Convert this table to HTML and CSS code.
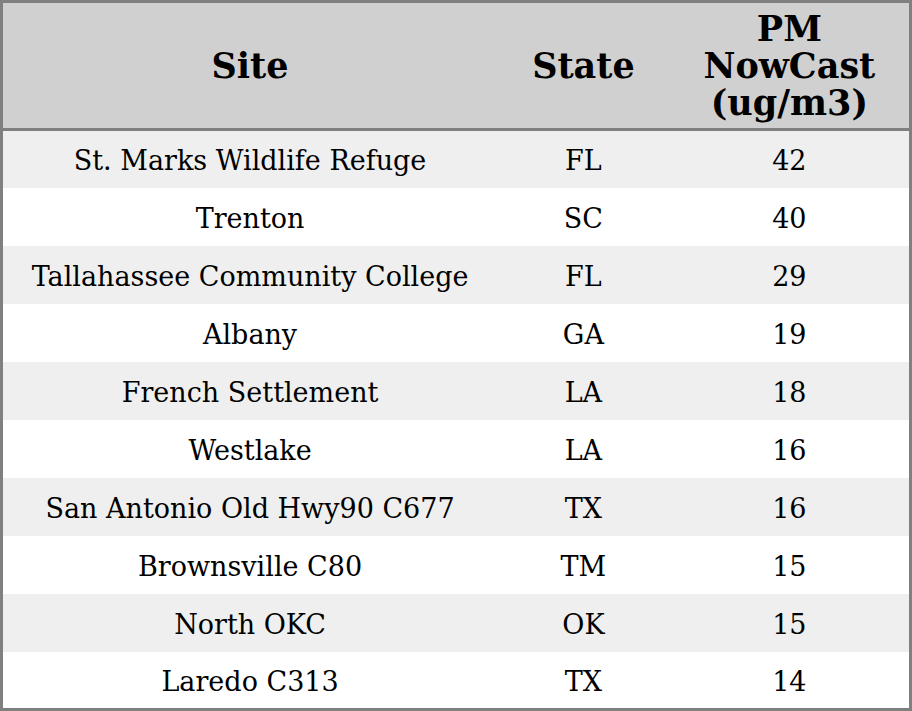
FILE: index.html
```html
<!DOCTYPE html>
<html>
<head>
<meta charset="utf-8">
<link rel="stylesheet" href="styles.css">
</head>
<body>
<table class="aq-table">
  <colgroup>
    <col class="col-site">
    <col class="col-state">
    <col class="col-pm">
  </colgroup>
  <thead>
    <tr class="head-row">
      <th>Site</th>
      <th>State</th>
      <th>PM<br>NowCast<br>(ug/m3)</th>
    </tr>
  </thead>
  <tbody>
    <tr><td>St. Marks Wildlife Refuge</td><td>FL</td><td>42</td></tr>
    <tr><td>Trenton</td><td>SC</td><td>40</td></tr>
    <tr><td>Tallahassee Community College</td><td>FL</td><td>29</td></tr>
    <tr><td>Albany</td><td>GA</td><td>19</td></tr>
    <tr><td>French Settlement</td><td>LA</td><td>18</td></tr>
    <tr><td>Westlake</td><td>LA</td><td>16</td></tr>
    <tr><td>San Antonio Old Hwy90 C677</td><td>TX</td><td>16</td></tr>
    <tr><td>Brownsville C80</td><td>TM</td><td>15</td></tr>
    <tr><td>North OKC</td><td>OK</td><td>15</td></tr>
    <tr><td>Laredo C313</td><td>TX</td><td>14</td></tr>
  </tbody>
</table>
</body>
</html>
```

FILE: styles.css
```css
html, body {
  margin: 0;
  padding: 0;
  background: #ffffff;
}

.aq-table {
  width: 912px;
  border-collapse: collapse;
  border: 3px solid #808080;
  font-family: "DejaVu Serif", serif;
  color: #000000;
  table-layout: fixed;
}

.col-site { width: 494px; }
.col-state { width: 172px; }
.col-pm { width: 240px; }

.head-row {
  background: #d0d0d0;
  height: 128px;
}

.head-row th {
  font-size: 35px;
  font-weight: bold;
  line-height: 37px;
  text-align: center;
  vertical-align: middle;
  padding: 0;
  border-bottom: 3px solid #808080;
}

.aq-table tbody tr {
  height: 58px;
}

.aq-table tbody tr:nth-child(odd) {
  background: #efefef;
}

.aq-table td {
  font-size: 27px;
  text-align: center;
  vertical-align: middle;
  padding: 3px 0 0 0;
}
```
